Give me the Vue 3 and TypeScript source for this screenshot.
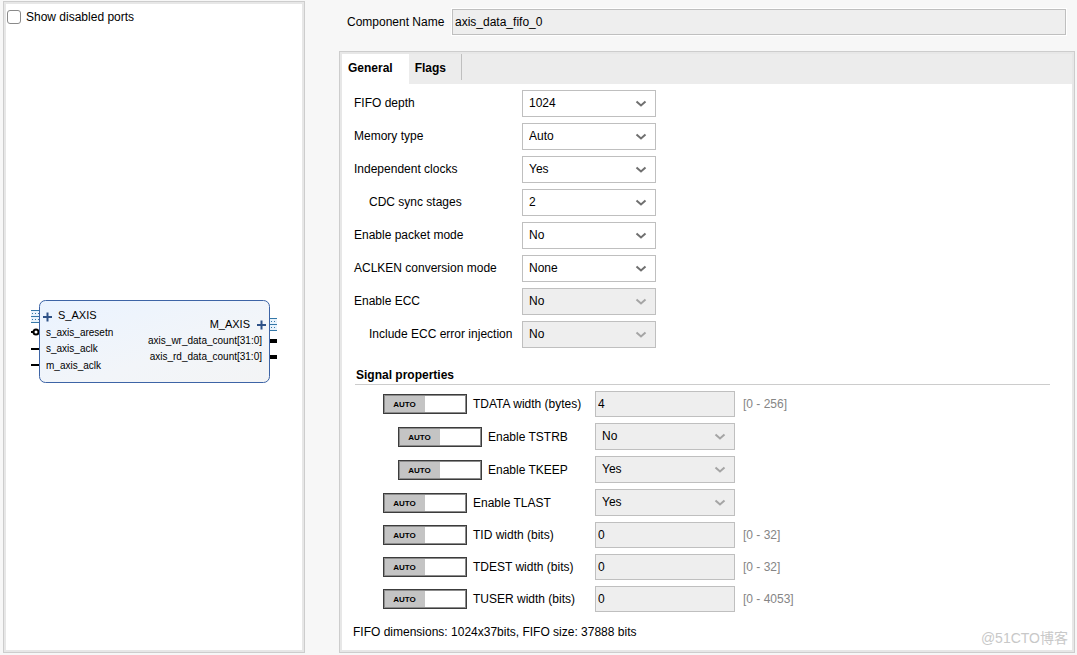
<script setup lang="ts">
import { ref } from 'vue'

interface Field {
  id: string
  label: string
  value: string
  options: string[]
  indent?: boolean
  disabled?: boolean
}

interface Signal {
  id: string
  label: string
  value: string
  kind: 'text' | 'select'
  indent?: boolean
  range?: string
}

const showDisabled = ref(false)
const componentName = ref('axis_data_fifo_0')
const activeTab = ref('General')
const tabs = ['General', 'Flags']

const fields = ref<Field[]>([
  { id: 'depth', label: 'FIFO depth', value: '1024', options: ['512', '1024', '2048'] },
  { id: 'memory', label: 'Memory type', value: 'Auto', options: ['Auto', 'Block RAM'] },
  { id: 'clocks', label: 'Independent clocks', value: 'Yes', options: ['Yes', 'No'] },
  { id: 'cdc', label: 'CDC sync stages', value: '2', options: ['2', '3', '4'], indent: true },
  { id: 'packet', label: 'Enable packet mode', value: 'No', options: ['Yes', 'No'] },
  { id: 'aclken', label: 'ACLKEN conversion mode', value: 'None', options: ['None'] },
  { id: 'ecc', label: 'Enable ECC', value: 'No', options: ['Yes', 'No'], disabled: true },
  { id: 'eccinj', label: 'Include ECC error injection', value: 'No', options: ['Yes', 'No'], indent: true, disabled: true },
])

const signals = ref<Signal[]>([
  { id: 'tdata', label: 'TDATA width (bytes)', value: '4', kind: 'text', range: '[0 - 256]' },
  { id: 'tstrb', label: 'Enable TSTRB', value: 'No', kind: 'select', indent: true },
  { id: 'tkeep', label: 'Enable TKEEP', value: 'Yes', kind: 'select', indent: true },
  { id: 'tlast', label: 'Enable TLAST', value: 'Yes', kind: 'select' },
  { id: 'tid', label: 'TID width (bits)', value: '0', kind: 'text', range: '[0 - 32]' },
  { id: 'tdest', label: 'TDEST width (bits)', value: '0', kind: 'text', range: '[0 - 32]' },
  { id: 'tuser', label: 'TUSER width (bits)', value: '0', kind: 'text', range: '[0 - 4053]' },
])
</script>

<template>
  <main class="page">
    <section class="panel preview">
      <label class="show-ports">
        <input v-model="showDisabled" type="checkbox" class="check" />
        <span>Show disabled ports</span>
      </label>
      <div class="canvas">
        <svg class="block" width="248" height="84" viewBox="0 0 248 84" role="img" aria-label="FIFO block symbol">
          <defs>
            <linearGradient id="body-fill" x1="0" y1="0" x2="1" y2="1">
              <stop offset="0" stop-color="#eaf3ff" />
              <stop offset="0.6" stop-color="#f2f5f9" />
              <stop offset="1" stop-color="#f3f4f5" />
            </linearGradient>
          </defs>
          <g shape-rendering="crispEdges">
            <rect x="1" y="10" width="8" height="13" fill="#e8f3fc" />
            <rect x="239" y="18" width="8" height="13" fill="#e8f3fc" />
            <path d="M1 10.5h8M1 16.5h8M1 22.5h8M239 18.5h8M239 24.5h8M239 30.5h8" stroke="#3578a8" />
            <path d="M2 13.5h7M2 19.5h7M241 21.5h6M241 27.5h6" stroke="#3578a8" stroke-dasharray="1 2" />
            <path d="M1 49h8M1 65h8" stroke="#000" stroke-width="2" />
            <path d="M239 41h8M239 57h8" stroke="#000" stroke-width="4" />
          </g>
          <path d="M1 32h3" stroke="#000" stroke-width="2" />
          <circle cx="6" cy="32" r="2.5" fill="#fff" stroke="#000" stroke-width="2" />
          <rect x="9.500" y="0.500" width="230" height="82" rx="6" fill="url(#body-fill)" stroke="#3d64a6" />
          <path d="M13 17h9M17.500 12.500v9M227 25h9M231.500 20.500v9" stroke="#2e5288" stroke-width="2" />
          <text class="bus" x="28" y="19">S_AXIS</text>
          <text class="port" x="16" y="36">s_axis_aresetn</text>
          <text class="port" x="16" y="52">s_axis_aclk</text>
          <text class="port" x="16" y="69">m_axis_aclk</text>
          <text class="bus end" x="220" y="28">M_AXIS</text>
          <text class="port end" x="232" y="44">axis_wr_data_count[31:0]</text>
          <text class="port end" x="232" y="60">axis_rd_data_count[31:0]</text>
        </svg>
      </div>
    </section>

    <section class="config">
      <div class="name-row">
        <label for="component-name">Component Name</label>
        <input id="component-name" v-model="componentName" class="text-box name-box" type="text" readonly />
      </div>

      <div class="panel options">
        <div class="tabs" role="tablist">
          <button
            v-for="tab in tabs"
            :key="tab"
            type="button"
            role="tab"
            class="tab"
            :class="{ active: tab === activeTab }"
            :aria-selected="tab === activeTab"
            @click="activeTab = tab"
          >{{ tab }}</button>
        </div>

        <div class="fields">
          <div v-for="f in fields" :key="f.id" class="field">
            <label :for="f.id" :class="{ indent: f.indent }">{{ f.label }}</label>
            <div class="combo">
              <select :id="f.id" v-model="f.value" :disabled="f.disabled">
                <option v-for="o in f.options" :key="o">{{ o }}</option>
              </select>
              <svg class="chevron" :class="{ dim: f.disabled }" width="12" height="8" viewBox="0 0 12 8" aria-hidden="true">
                <path d="M1.500 1.500L6 5.500L10.500 1.500" />
              </svg>
            </div>
          </div>
        </div>

        <h2 class="heading">Signal properties</h2>

        <div class="signals">
          <div v-for="s in signals" :key="s.id" class="signal">
            <div class="signal-label" :class="{ indent: s.indent }">
              <button type="button" role="switch" aria-checked="false" class="auto" :aria-label="'Auto ' + s.label">
                <span class="auto-text">AUTO</span>
              </button>
              <label :for="s.id">{{ s.label }}</label>
            </div>
            <input v-if="s.kind === 'text'" :id="s.id" v-model="s.value" class="text-box" type="text" readonly />
            <div v-else class="combo">
              <select :id="s.id" v-model="s.value" disabled>
                <option>Yes</option>
                <option>No</option>
              </select>
              <svg class="chevron dim" width="12" height="8" viewBox="0 0 12 8" aria-hidden="true">
                <path d="M1.500 1.500L6 5.500L10.500 1.500" />
              </svg>
            </div>
            <span class="range">{{ s.range }}</span>
          </div>
        </div>

        <p class="summary">FIFO dimensions: 1024x37bits, FIFO size: 37888 bits</p>
      </div>
    </section>
    <span class="watermark">@51CTO博客</span>
  </main>
</template>

<style>
body {
  margin: 0;
  background: #f7f7f7;
}
</style>

<style scoped>
.page,
.page * {
  box-sizing: border-box;
}
.page {
  position: relative;
  display: grid;
  grid-template-columns: minmax(0, 302fr) minmax(0, 736fr);
  gap: 34px;
  min-height: 100vh;
  padding: 1px 2px 2px 3px;
  background: #f7f7f7;
  color: #000;
  font: 12px/16px "Liberation Sans", Arial, "Noto Sans CJK SC", sans-serif;
}
.page button,
.page input,
.page select {
  margin: 0;
  font: inherit;
  color: inherit;
  border-radius: 0;
}
.panel {
  background: #fff;
  border: 1px solid #cdcdcd;
  box-shadow: inset 0 0 0 2px #e7e7e7;
  padding: 2px;
}
.preview {
  display: flex;
  flex-direction: column;
}
.show-ports {
  display: flex;
  align-items: center;
  gap: 5px;
  padding: 5px 1px;
}
.page .check {
  appearance: none;
  width: 14px;
  height: 14px;
  border: 1px solid #8a8a8a;
  border-radius: 3px;
  background: #fff;
}
.page .check:checked {
  background: #5a7fb5;
}
.canvas {
  flex: 1;
  display: flex;
  align-items: center;
  justify-content: center;
  padding-top: 4px;
}
.bus {
  font-size: 11px;
}
.port {
  font-size: 10px;
}
.end {
  text-anchor: end;
}
.config {
  display: flex;
  flex-direction: column;
}
.name-row {
  display: flex;
  align-items: center;
  gap: 5px;
  padding: 8px 9px 16px 8px;
}
.name-row label {
  flex: 0 0 100px;
  white-space: nowrap;
}
.text-box {
  width: 100%;
  height: 26px;
  padding: 0 2px;
  border: 1px solid #bfbfbf;
  background: #eee;
  outline: none;
}
.name-box {
  flex: 1;
  min-width: 0;
  box-shadow: 0 0 0 1px #fff;
}
.options {
  flex: 1;
}
.tabs {
  display: flex;
  align-items: flex-start;
  height: 30px;
  background: #ececec;
}
.page .tab {
  height: 30px;
  border: 0;
  padding: 0 16px 2px 6px;
  background: none;
  font-weight: bold;
}
.page .tab.active {
  background: #fff;
}
.page .tab:last-child {
  height: 26px;
  border-right: 1px solid #bfbfbf;
  padding: 2px 15px 0 6px;
}
.fields {
  display: grid;
  gap: 6px;
  padding: 6px 12px 0;
}
.field {
  display: grid;
  grid-template-columns: 168px 134px;
  align-items: center;
}
.field label {
  white-space: nowrap;
  padding-bottom: 2px;
}
.signal label {
  white-space: nowrap;
}
.field label.indent {
  padding-left: 15px;
}
.combo {
  position: relative;
}
.combo select {
  display: block;
  appearance: none;
  width: 100%;
  height: 27px;
  padding: 0 24px 2px 6px;
  border: 1px solid #bfbfbf;
  background: #fff;
}
.combo select:disabled {
  background: #eee;
  opacity: 1;
}
.chevron {
  position: absolute;
  right: 9px;
  top: 10px;
  pointer-events: none;
  fill: none;
  stroke: #707070;
  stroke-width: 2;
}
.chevron.dim {
  stroke: #a5a5a5;
}
.heading {
  margin: 19px 22px 6px 13px;
  padding: 0 1px 1px;
  border-bottom: 1px solid #ccc;
  font-size: 12px;
  line-height: 16px;
}
.signals {
  display: grid;
  gap: 6px;
  padding-left: 41px;
}
.signal {
  display: grid;
  grid-template-columns: 204px 140px auto;
  column-gap: 8px;
  align-items: center;
}
.signal-label {
  display: flex;
  align-items: center;
  gap: 6px;
}
.signal-label.indent {
  padding-left: 15px;
}
.page .auto {
  width: 84px;
  height: 20px;
  padding: 0;
  border: 1px solid #3c3c3c;
  box-shadow: inset 0 0 0 1px #8c8c8c;
  background: linear-gradient(90deg, #c4c4c4 50%, #fff 50%);
  text-align: left;
}
.auto-text {
  display: block;
  width: 50%;
  padding-top: 2px;
  text-align: center;
  font-size: 8px;
  font-weight: bold;
  line-height: 16px;
}
.range {
  color: #858585;
}
.summary {
  margin: 12px 11px 10px;
}
.watermark {
  position: absolute;
  right: 9px;
  bottom: 8px;
  color: #c8c8c8;
  font-size: 14px;
  line-height: 18px;
}
</style>
